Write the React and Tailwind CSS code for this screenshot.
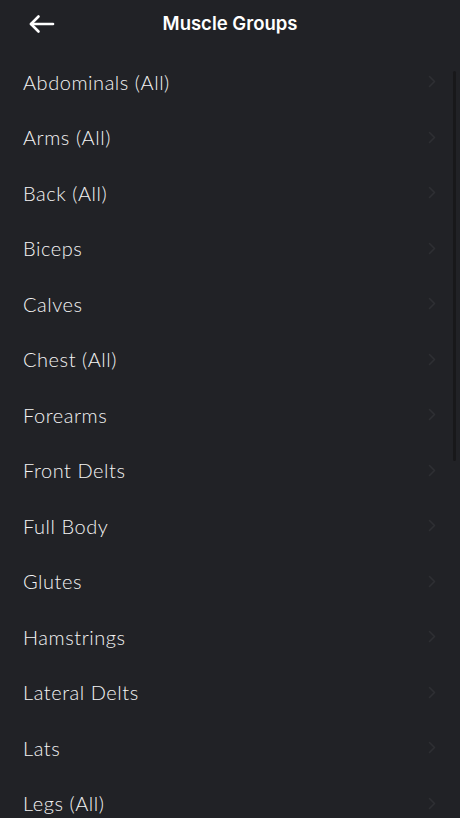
import React from "react";

const items = [
  "Abdominals (All)",
  "Arms (All)",
  "Back (All)",
  "Biceps",
  "Calves",
  "Chest (All)",
  "Forearms",
  "Front Delts",
  "Full Body",
  "Glutes",
  "Hamstrings",
  "Lateral Delts",
  "Lats",
  "Legs (All)",
  "Lower Back",
];

export default function App() {
  return (
    <div className="relative w-[460px] h-[818px] overflow-hidden bg-[#212226] text-white" style={{ fontFamily: "Lato, 'Noto Sans', sans-serif" }}>
      <div className="relative h-[55px] flex items-center justify-center">
        <button className="absolute left-[27px] top-[13px] w-[28px] h-[22px] flex items-center justify-center">
          <svg width="27" height="20" viewBox="0 0 27 20" fill="none" stroke="white" strokeWidth="2.6" strokeLinecap="round" strokeLinejoin="round">
            <path d="M25 10H3" />
            <path d="M10.5 2.5L3 10l7.5 7.5" />
          </svg>
        </button>
        <div className="text-[18.5px] font-semibold -mt-[7px]" style={{ fontFamily: "Inter, sans-serif" }}>Muscle Groups</div>
      </div>
      <div className="flex flex-col -mt-[1px]">
        {items.map((t) => (
          <div key={t} className="h-[55.5px] shrink-0 flex items-center justify-between pl-[23px] pr-[24px]">
            <span className="text-[20px] font-light text-[#f4f4f4] tracking-[0.55px]">{t}</span>
            <svg width="8" height="13" viewBox="0 0 8 13" fill="none" stroke="#2e2f33" strokeWidth="1.6" strokeLinecap="round" strokeLinejoin="round">
              <path d="M1.5 1.5l5 5-5 5" />
            </svg>
          </div>
        ))}
      </div>
      <div className="absolute right-[4px] top-[71px] w-[3px] h-[390px] bg-[#18181a] rounded-sm" />
    </div>
  );
}
